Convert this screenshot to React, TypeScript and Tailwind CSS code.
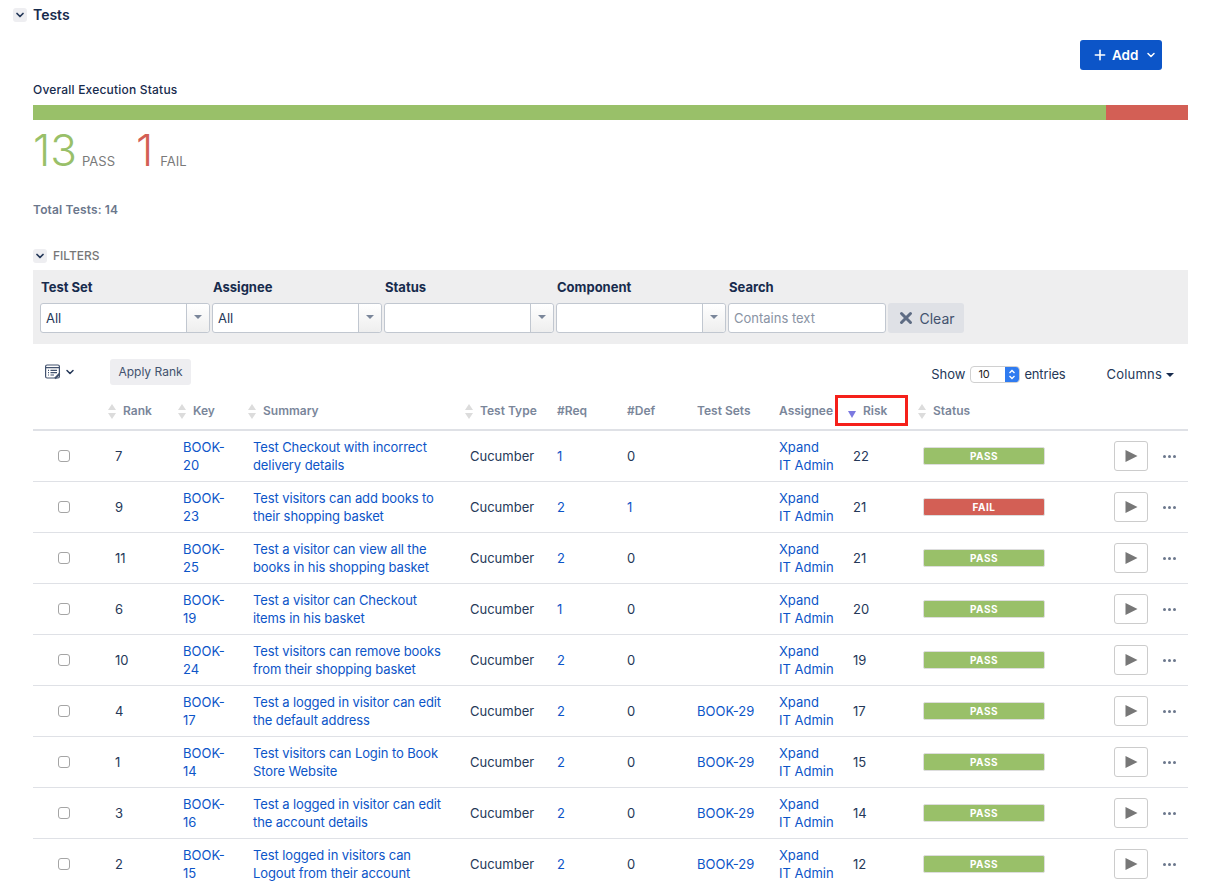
import { ChevronDown, Plus, X } from 'lucide-react'

const rows = [
  { rank: 7, key: ['BOOK-', '20'], summary: ['Test Checkout with incorrect', 'delivery details'], req: 1, def: 0, sets: '', risk: 22, status: 'PASS' },
  { rank: 9, key: ['BOOK-', '23'], summary: ['Test visitors can add books to', 'their shopping basket'], req: 2, def: 1, sets: '', risk: 21, status: 'FAIL' },
  { rank: 11, key: ['BOOK-', '25'], summary: ['Test a visitor can view all the', 'books in his shopping basket'], req: 2, def: 0, sets: '', risk: 21, status: 'PASS' },
  { rank: 6, key: ['BOOK-', '19'], summary: ['Test a visitor can Checkout', 'items in his basket'], req: 1, def: 0, sets: '', risk: 20, status: 'PASS' },
  { rank: 10, key: ['BOOK-', '24'], summary: ['Test visitors can remove books', 'from their shopping basket'], req: 2, def: 0, sets: '', risk: 19, status: 'PASS' },
  { rank: 4, key: ['BOOK-', '17'], summary: ['Test a logged in visitor can edit', 'the default address'], req: 2, def: 0, sets: 'BOOK-29', risk: 17, status: 'PASS' },
  { rank: 1, key: ['BOOK-', '14'], summary: ['Test visitors can Login to Book', 'Store Website'], req: 2, def: 0, sets: 'BOOK-29', risk: 15, status: 'PASS' },
  { rank: 3, key: ['BOOK-', '16'], summary: ['Test a logged in visitor can edit', 'the account details'], req: 2, def: 0, sets: 'BOOK-29', risk: 14, status: 'PASS' },
  { rank: 2, key: ['BOOK-', '15'], summary: ['Test logged in visitors can', 'Logout from their account'], req: 2, def: 0, sets: 'BOOK-29', risk: 12, status: 'PASS' },
]

const cols = 'grid grid-cols-[82px_68px_70px_217px_87px_70px_70px_82px_74px_70px_191px_49px_25px]'

function SortIcon({ className }: { className: string }) {
  return (
    <svg width="8" height="15" viewBox="0 0 8 15" className={`shrink-0 mr-[7px] ${className}`}>
      <path d="M4 0 L8 6 H0 Z M0 9 H8 L4 15 Z" fill="#dcdcdc" />
    </svg>
  )
}

function Toggle() {
  return (
    <span className="w-[14px] h-[14px] bg-[#eeeef1] rounded-[3px] flex items-center justify-center">
      <ChevronDown size={12} strokeWidth={3.5} className="text-[#253858]" />
    </span>
  )
}

function SelectBox({ value }: { value?: string }) {
  return (
    <div className="w-[170px] h-[30px] bg-white border border-[#c1c7d0] rounded-[3px] flex items-stretch">
      <span className="flex-1 pl-[5px] text-[13px] leading-[28px] text-[#253858]">{value}</span>
      <span className="w-[23px] border-l border-[#c1c7d0] bg-gradient-to-b from-white to-[#eeeeee] flex items-center justify-center rounded-r-[3px]">
        <span className="w-0 h-0 border-x-[4px] border-x-transparent border-t-[4px] border-t-[#7a869a] -mt-[3px]" />
      </span>
    </div>
  )
}

function HeadCell({ label, sort, first }: { label?: string; sort?: boolean; first?: boolean }) {
  return (
    <div className="flex items-center text-[12px] font-semibold text-[#7a869a]">
      {sort && <SortIcon className={first ? '-ml-[7px]' : '-ml-[5px]'} />}
      {label}
    </div>
  )
}

export default function App() {
  return (
    <div className="w-[1210px] h-[883px] overflow-hidden bg-white text-[#172b4d] font-['Inter','Liberation_Sans',sans-serif]">
      <div className="flex items-center gap-[6px] pl-[13px] pt-[7px] h-[22px]">
        <Toggle />
        <span className="text-[14px] font-semibold leading-[15px]">Tests</span>
      </div>

      <div className="flex justify-end pr-[48px] mt-[18px]">
        <button className="w-[82px] h-[30px] bg-[#0c55c8] rounded-[3px] text-white text-[13.5px] font-semibold flex items-center pl-[12px] gap-[4px]">
          <Plus size={16} strokeWidth={2.4} />
          Add
          <ChevronDown size={12} strokeWidth={3} className="ml-[3px]" />
        </button>
      </div>

      <div className="pl-[33px] pr-[22px]">
        <div className="mt-[12px] text-[12px] font-medium tracking-[0.2px] leading-[15px]">Overall Execution Status</div>
        <div className="flex h-[15px] mt-[8px]">
          <div className="w-[1073px] bg-[#99c069]" />
          <div className="flex-1 bg-[#d35f55]" />
        </div>

        <div className="flex items-baseline h-[50px] mt-[5px]">
          <span className="text-[44px] font-light leading-[50px] text-[#99c069]">13</span>
          <span className="ml-[5px] text-[13px] text-[#7a7a7a]">PASS</span>
          <span className="ml-[21px] text-[44px] font-light leading-[50px] text-[#d35f55]">1</span>
          <span className="ml-[7px] text-[13px] text-[#7a7a7a]">FAIL</span>
        </div>

        <div className="mt-[27px] text-[12px] font-semibold tracking-[0.15px] leading-[15px] text-[#6b778c]">Total Tests: 14</div>

        <div className="flex items-center gap-[6px] mt-[31px] h-[15px]">
          <Toggle />
          <span className="text-[12px] font-medium text-[#777777]">FILTERS</span>
        </div>

        <div className="mt-[7px] h-[74px] bg-[#eeeeef] px-[7px] pt-[9px] flex gap-[2px]">
          {['Test Set', 'Assignee', 'Status', 'Component'].map((label, i) => (
            <div key={label} className="w-[170px]">
              <div className="pl-[1px] h-[24px] text-[13px] font-bold leading-[16px]">{label}</div>
              <SelectBox value={i < 2 ? 'All' : undefined} />
            </div>
          ))}
          <div className="w-[158px]">
            <div className="pl-[1px] h-[24px] text-[13px] font-bold leading-[16px]">Search</div>
            <div className="h-[30px] bg-white border border-[#c1c7d0] rounded-[3px] pl-[5px] text-[13px] leading-[28px] text-[#8993a4]">
              Contains text
            </div>
          </div>
          <button className="mt-[24px] w-[76px] h-[30px] bg-[#dfe1e6] rounded-[3px] text-[14px] text-[#42526e] flex items-center justify-center gap-[4px]">
            <X size={18} strokeWidth={4} className="text-[#5e6c84]" />
            Clear
          </button>
        </div>

        <div className="flex items-center h-[26px] mt-[15px] relative">
          <div className="flex items-center ml-[12px] w-[65px]">
            <svg width="16" height="16" viewBox="0 0 16 16" fill="none" stroke="#42526e" strokeWidth="1.2">
              <rect x="0.6" y="1" width="13.8" height="13" rx="1.5" />
              <path d="M0.6 3.6 H14.4 M3 6.3 H4 M5.5 6.3 H12 M3 8.6 H4 M5.5 8.6 H12 M3 11 H4 M5.5 11 H9" />
              <path d="M10 14.5 L14.5 9.8" strokeWidth="2" />
            </svg>
            <ChevronDown size={12} strokeWidth={3} className="ml-[3px] text-[#253858]" />
          </div>
          <button className="w-[81px] h-[26px] bg-[#eeeef1] rounded-[3px] text-[12px] text-[#42526e]">Apply Rank</button>
          <div className="ml-auto flex items-center text-[13px] text-[#253858] mt-[5px]">
            <span>Show</span>
            <span className="ml-[5px] w-[50px] h-[17px] border border-[#d0d0d0] rounded-[4px] flex items-center justify-between text-[11px] text-[#222222] pl-[7px] bg-white overflow-hidden">
              10
              <span className="w-[14px] h-[17px] bg-[#2f7bf0] rounded-r-[4px] flex flex-col items-center justify-center">
                <svg width="8" height="11" viewBox="0 0 8 11" fill="none" stroke="white" strokeWidth="1.3">
                  <path d="M1.5 4 L4 1.5 L6.5 4 M1.5 7 L4 9.5 L6.5 7" />
                </svg>
              </span>
            </span>
            <span className="ml-[4px] tracking-[-0.15px]">entries</span>
            <span className="ml-[41px] mr-[14px] flex items-center gap-[4px] tracking-[0.2px]">
              Columns
              <span className="w-0 h-0 border-x-[4px] border-x-transparent border-t-[4px] border-t-[#172b4d]" />
            </span>
          </div>
        </div>

        <div className={`${cols} relative h-[35px] mt-[11px] pb-[3px] border-b-2 border-[#dfe1e6]`}>
          <div />
          <HeadCell label="Rank" sort first />
          <HeadCell label="Key" sort />
          <HeadCell label="Summary" sort />
          <HeadCell label="Test Type" sort />
          <HeadCell label="#Req" />
          <HeadCell label="#Def" />
          <HeadCell label="Test Sets" />
          <HeadCell label="Assignee" />
          <div className="flex items-center text-[12px] font-semibold text-[#7a869a]">
            <svg width="8" height="7" viewBox="0 0 8 7" className="-ml-[5px] mr-[7px] mt-[7px]">
              <path d="M0 0 H8 L4 7 Z" fill="#7b79e0" />
            </svg>
            Risk
          </div>
          <HeadCell label="Status" sort />
          <div />
          <div />
          <div className="absolute left-[802px] -top-[1px] w-[73px] h-[31px] border-[3px] border-[#f5201a]" />
        </div>

        {rows.map(r => (
          <div key={r.key[1]} className={`${cols} h-[51px] border-b border-[#dfe1e6] items-center text-[13px] leading-[18px] text-[#253858]`}>
            <div className="pl-[25px]">
              <div className="w-[12px] h-[12px] border border-[#a5a5a5] rounded-[3px] bg-white" />
            </div>
            <div>{r.rank}</div>
            <div className="text-[#0c55c8]">
              {r.key[0]}
              <br />
              {r.key[1]}
            </div>
            <div className="text-[#0c55c8] whitespace-nowrap tracking-[-0.1px]">
              {r.summary[0]}
              <br />
              {r.summary[1]}
            </div>
            <div>Cucumber</div>
            <div className="text-[#0c55c8]">{r.req}</div>
            <div className={r.def ? 'text-[#0c55c8]' : ''}>{r.def}</div>
            <div className="text-[#0c55c8]">{r.sets}</div>
            <div className="text-[#0c55c8]">
              Xpand
              <br />
              IT Admin
            </div>
            <div>{r.risk}</div>
            <div>
              <div
                className={`w-[122px] h-[18px] rounded-[2px] border border-[#dddddd] text-white text-[10px] font-bold tracking-[0.5px] leading-[16px] text-center ${
                  r.status === 'PASS' ? 'bg-[#99c069]' : 'bg-[#d35f55]'
                }`}
              >
                {r.status}
              </div>
            </div>
            <div>
              <div className="w-[34px] h-[30px] border border-[#cccccc] rounded-[3px] flex items-center justify-center">
                <svg width="13" height="12" viewBox="0 0 13 12">
                  <path d="M0.5 0 L12.5 6 L0.5 12 Z" fill="#777777" />
                </svg>
              </div>
            </div>
            <div className="flex items-center gap-[2px]">
              <span className="w-[3px] h-[3px] rounded-full bg-[#6b778c]" />
              <span className="w-[3px] h-[3px] rounded-full bg-[#6b778c]" />
              <span className="w-[3px] h-[3px] rounded-full bg-[#6b778c]" />
            </div>
          </div>
        ))}
      </div>
    </div>
  )
}
